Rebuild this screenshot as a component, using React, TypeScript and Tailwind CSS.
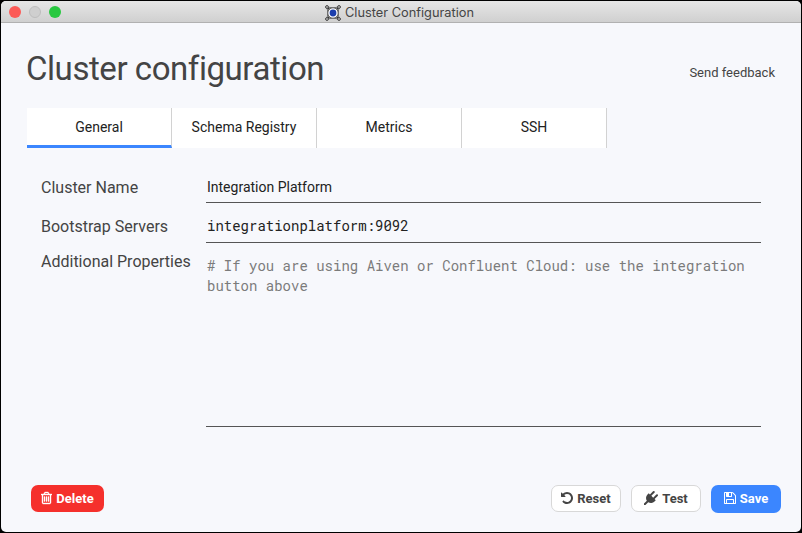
import React from "react";

const tabs = ["General", "Schema Registry", "Metrics", "SSH"];

const icons = {
  trash: {
    box: "192 0 1408 1792",
    width: 11,
    path: "M704 736v576q0 14-9 23t-23 9h-64q-14 0-23-9t-9-23v-576q0-14 9-23t23-9h64q14 0 23 9t9 23zm256 0v576q0 14-9 23t-23 9h-64q-14 0-23-9t-9-23v-576q0-14 9-23t23-9h64q14 0 23 9t9 23zm256 0v576q0 14-9 23t-23 9h-64q-14 0-23-9t-9-23v-576q0-14 9-23t23-9h64q14 0 23 9t9 23zm128 724v-948h-896v948q0 22 7 40.5t14.5 27 10.5 8.5h832q3 0 10.5-8.5t14.5-27 7-40.5zm-672-1076h448l-48-117q-7-9-17-11h-317q-10 2-17 11zm928 32v64q0 14-9 23t-23 9h-96v948q0 83-47 143.5t-113 60.5h-832q-66 0-113-58.5t-47-141.5v-952h-96q-14 0-23-9t-9-23v-64q0-14 9-23t23-9h309l70-167q15-37 54-63t79-26h320q40 0 79 26t54 63l70 167h309q14 0 23 9t9 23z",
  },
  undo: {
    box: "128 0 1536 1792",
    width: 12,
    path: "M1664 896q0 156-61 298t-164 245-245 164-298 61q-172 0-327-72.5t-264-204.5q-7-10-6.5-22.5t8.5-20.5l137-138q10-9 25-9 16 2 23 12 73 95 179 147t225 52q104 0 198.5-40.5t163.5-109.5 109.5-163.5 40.5-198.5-40.5-198.5-109.5-163.5-163.5-109.5-198.5-40.5q-98 0-188 35.5t-160 101.5l137 138q31 30 14 69-17 40-59 40h-448q-26 0-45-19t-19-45v-448q0-42 40-59 39-17 69 14l130 129q107-101 244.5-156.5t284.5-55.5q156 0 298 61t245 164 164 245 61 298z",
  },
  plug: {
    box: "0 0 1792 1792",
    width: 14,
    path: "M1755 453q37 38 37 90.5t-37 90.5l-401 400 150 150-160 160q-163 163-389.5 186.5t-411.5-100.5l-362 362h-181v-181l362-362q-124-185-100.5-411.5t186.5-389.5l160-160 150 150 400-401q38-37 91-37t90 37 37 90.5-37 90.5l-400 401 234 234 401-400q38-37 91-37t90 37z",
  },
  save: {
    box: "128 0 1536 1792",
    width: 12,
    path: "M512 1536h768v-384h-768v384zm896 0h128v-896q0-14-10-38.5t-20-34.5l-281-281q-10-10-34-20t-39-10v416q0 40-28 68t-68 28h-576q-40 0-68-28t-28-68v-416h-128v1280h128v-416q0-40 28-68t68-28h832q40 0 68 28t28 68v416zm-384-928v-320q0-13-9.5-22.5t-22.5-9.5h-192q-13 0-22.5 9.5t-9.5 22.5v320q0 13 9.5 22.5t22.5 9.5h192q13 0 22.5-9.5t9.5-22.5zm640 32v928q0 40-28 68t-68 28h-1344q-40 0-68-28t-28-68v-1344q0-40 28-68t68-28h928q40 0 88 20t76 48l280 280q28 28 48 76t20 88z",
  },
};

function Icon({ name }: { name: keyof typeof icons }) {
  const { box, width, path } = icons[name];
  return (
    <svg className="mb-px shrink-0" width={width} height="14" viewBox={box} fill="currentColor" stroke="currentColor" strokeWidth={name === "trash" ? 50 : 0}>
      <path d={path} />
    </svg>
  );
}

function AppIcon() {
  return (
    <svg width="16" height="16" viewBox="0 0 16 16" fill="none" stroke="#383838" strokeWidth="1">
      <path d="M3 3l2 2M13 3l-2 2M3 13l2-2M13 13l-2-2" strokeWidth="1.5" />
      <path d="M3.5 2.2Q8 3.6 12.5 2.2M3.5 13.8Q8 12.4 12.5 13.8M2.2 3.5Q3.6 8 2.2 12.5M13.8 3.5Q12.4 8 13.8 12.5" strokeWidth="0.8" stroke="#555" />
      <circle cx="2" cy="2" r="1.4" fill="#ddd" />
      <circle cx="14" cy="2" r="1.4" fill="#ddd" />
      <circle cx="2" cy="14" r="1.4" fill="#ddd" />
      <circle cx="14" cy="14" r="1.4" fill="#ddd" />
      <circle cx="8" cy="8" r="5.2" fill="#fff" stroke="#444" strokeWidth="0.8" />
      <circle cx="8" cy="8" r="3.4" fill="#1c3fae" stroke="none" />
    </svg>
  );
}

function TitleBar() {
  return (
    <header className="relative flex h-[22px] shrink-0 items-center justify-center border-b border-[#b1b1b1] bg-linear-to-b from-[#e6e6e6] to-[#d0d0d0]">
      <div className="absolute left-2 top-[5px] flex gap-2">
        <span className="size-3 rounded-full bg-[#fc5b57]" />
        <span className="size-3 rounded-full border border-[#bdbdbd] bg-[#cfcfcf]" />
        <span className="size-3 rounded-full bg-[#28c840]" />
      </div>
      <div className="flex items-center gap-1 pr-[3px] pt-[2px] font-['Inter',sans-serif] text-[12.8px] leading-4 text-[#454545]">
        <AppIcon />
        <span>Cluster Configuration</span>
      </div>
    </header>
  );
}

export default function App() {
  return (
    <div className="h-[533px] w-[802px] bg-black p-px font-['Roboto',sans-serif]">
      <div className="flex h-[531px] w-[800px] flex-col overflow-hidden rounded-[5px] bg-[#f7f8fc] text-[#444]">
        <TitleBar />
        <div className="flex h-[85px] items-center justify-between pl-[25px] pt-[5px] pr-[26px]">
          <h1 className="pt-[2px] text-[33px] leading-[40px] tracking-[-0.44px]">Cluster configuration</h1>
          <span className="pt-[10px] text-[13px]">Send feedback</span>
        </div>
        <nav className="ml-[26px] flex h-10">
          {tabs.map((tab, i) => (
            <div
              key={tab}
              className={`flex w-[145px] justify-center border-r border-[#d2d2d2] bg-white pt-[9px] text-sm text-[#222] ${i === 0 ? "border-b-[3px] border-b-[#3b86ff]" : ""}`}
            >
              {tab}
            </div>
          ))}
        </nav>
        <main className="ml-10 flex flex-col">
          <div className="flex h-[55px]">
            <label className="w-[165px] pt-[28px] text-base">Cluster Name</label>
            <div className="w-[555px] border-b border-[#555] pl-px pt-[29px] text-sm text-[#222]">Integration Platform</div>
          </div>
          <div className="flex h-10">
            <label className="w-[165px] pt-[12px] text-base">Bootstrap Servers</label>
            <div className="w-[555px] border-b border-[#555] pl-px pt-[13px] font-['Roboto_Mono','DejaVu_Sans_Mono',monospace] text-sm text-[#222]">integrationplatform:9092</div>
          </div>
          <div className="flex h-[184px]">
            <label className="w-[165px] whitespace-nowrap pt-[7px] text-base">Additional Properties</label>
            <div className="w-[555px] border-b border-[#555] pl-px pt-[13px] font-['Roboto_Mono','DejaVu_Sans_Mono',monospace] text-sm text-[#7b7b7b]">
              # If you are using Aiven or Confluent Cloud: use the integration<br />button above
            </div>
          </div>
        </main>
        <footer className="mt-[58px] flex items-start gap-[10px] pl-[30px] pr-[20px] text-[13px] font-bold">
          <button className="mr-auto flex h-[27px] w-[73px] items-center justify-center gap-1 rounded-[7px] bg-[#f5302c] text-white">
            <Icon name="trash" />Delete
          </button>
          <button className="flex h-[27px] w-[70px] items-center justify-center gap-1 rounded-[7px] border border-[#d8d8d8] bg-white">
            <Icon name="undo" />Reset
          </button>
          <button className="flex h-[27px] w-[70px] items-center justify-center gap-1 rounded-[7px] border border-[#d8d8d8] bg-white">
            <Icon name="plug" />Test
          </button>
          <button className="flex h-7 w-[70px] items-center justify-center gap-1 rounded-[7px] bg-[#3b86ff] pb-px text-white">
            <Icon name="save" />Save
          </button>
        </footer>
      </div>
    </div>
  );
}
